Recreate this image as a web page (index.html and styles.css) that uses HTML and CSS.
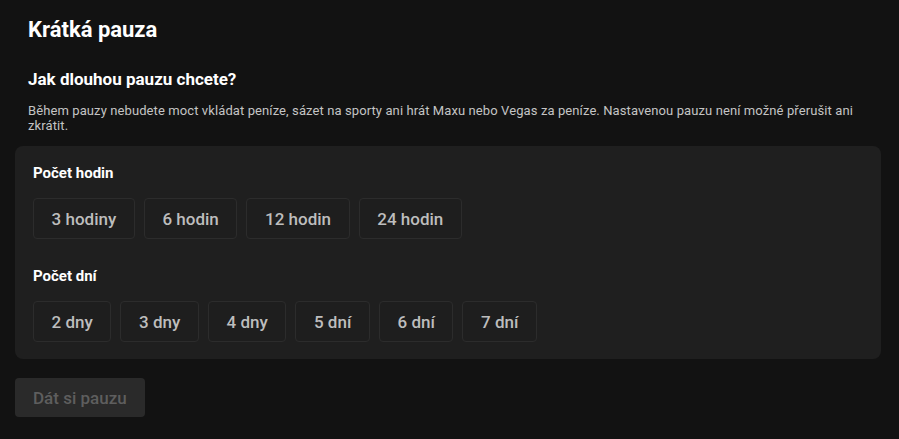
FILE: index.html
```html
<!DOCTYPE html>
<html lang="cs">
<head>
<meta charset="utf-8">
<link rel="stylesheet" href="styles.css">
</head>
<body>
<main class="page">
  <header class="intro">
    <h1 class="title">Krátká pauza</h1>
    <h2 class="question">Jak dlouhou pauzu chcete?</h2>
    <p class="desc">Během pauzy nebudete moct vkládat peníze, sázet na sporty ani hrát Maxu nebo Vegas za peníze. Nastavenou pauzu není možné přerušit ani zkrátit.</p>
  </header>
  <section class="card">
    <div class="group">
      <div class="label">Počet hodin</div>
      <div class="options">
        <button class="opt">3 hodiny</button>
        <button class="opt">6 hodin</button>
        <button class="opt">12 hodin</button>
        <button class="opt">24 hodin</button>
      </div>
    </div>
    <div class="group">
      <div class="label">Počet dní</div>
      <div class="options">
        <button class="opt">2 dny</button>
        <button class="opt">3 dny</button>
        <button class="opt">4 dny</button>
        <button class="opt">5 dní</button>
        <button class="opt">6 dní</button>
        <button class="opt">7 dní</button>
      </div>
    </div>
  </section>
  <div class="actions">
    <button class="submit" disabled>Dát si pauzu</button>
  </div>
</main>
</body>
</html>
```
FILE: styles.css
```css
* { box-sizing: border-box; }
html, body {
  margin: 0;
  background: #121212;
  font-family: Roboto, "Noto Sans", "Liberation Sans", sans-serif;
  color: #fff;
}
.page {
  padding: 0 18px 0 15px;
}
.intro {
  padding: 0 0 0 13px;
}
.title {
  margin: 0;
  padding-top: 16px;
  font-size: 22px;
  line-height: 28px;
  font-weight: 700;
  color: #fff;
}
.question {
  margin: 24px 0 0;
  font-size: 17px;
  line-height: 22px;
  font-weight: 700;
  color: #fff;
}
.desc {
  margin: 13px 0 0;
  font-size: 13px;
  line-height: 15px;
  letter-spacing: 0.1px;
  color: #c4c4c4;
}
.card {
  margin-top: 13px;
  background: #1f1f1f;
  border-radius: 8px;
  padding: 17px 18px 17px;
  display: flex;
  flex-direction: column;
  gap: 27px;
}
.label {
  font-size: 15px;
  line-height: 20px;
  font-weight: 700;
  color: #fff;
}
.options {
  margin-top: 15px;
  display: flex;
  gap: 9px;
}
.opt {
  height: 41px;
  padding: 0 17.6px;
  background: #1e1e1e;
  border: 1px solid #2c2c2c;
  border-radius: 4px;
  font-family: inherit;
  font-size: 17px;
  font-weight: 500;
  color: #bdbdbd;
}
.actions {
  margin-top: 19px;
  display: flex;
}
.submit {
  height: 39px;
  padding: 0 18px;
  background: #2a2a2a;
  border: none;
  border-radius: 4px;
  font-family: inherit;
  font-size: 17px;
  font-weight: 500;
  color: #5e5e5e;
}
```
